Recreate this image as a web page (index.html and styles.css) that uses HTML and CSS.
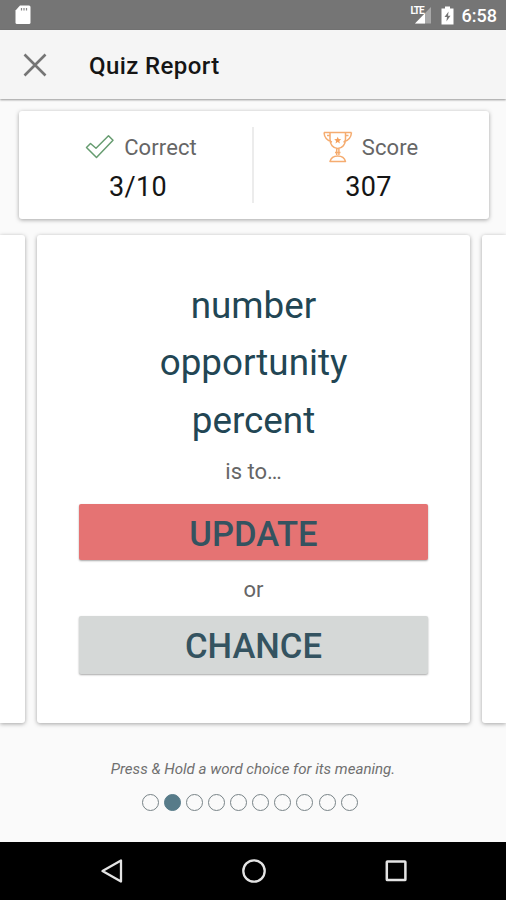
FILE: index.html
```html
<!DOCTYPE html>
<html lang="en">
<head>
<meta charset="utf-8">
<title>Quiz Report</title>
<link rel="stylesheet" href="styles.css">
</head>
<body>
<div class="screen">
  <div class="status-bar">
    <svg class="sd-icon" width="16" height="20" viewBox="0 0 16 20"><path d="M5 0.5H14Q15.500 .5 15.500 2V17.500Q15.500 19 14 19H2Q.5 19 .5 17.500V5.500Z" fill="#fff"/><path d="M6.500 3v2.500M9 3v2.500M11.500 3v2.500" stroke="#888" stroke-width="1.200"/></svg>
    <div class="status-right">
      <div class="signal"><span class="lte">LTE</span>
        <svg width="18" height="17" viewBox="0 0 18 17"><path d="M17 0V16.500H1Z" fill="#a8a8a8"/><path d="M11 6.200V16.500H1Z" fill="#fff"/></svg>
      </div>
      <svg class="battery" width="13" height="19" viewBox="0 0 13 19"><path d="M4 .5H9V2.500H12.500V18.500H.5V2.500H4Z" fill="#fff"/><path d="M7.600 5.500L3.500 11H6L5.400 15.500L9.500 9.800H7Z" fill="#757575"/></svg>
      <span class="clock">6:58</span>
    </div>
  </div>
  <header class="app-bar">
    <svg class="close" width="24" height="24" viewBox="0 0 24 24"><path d="M1.500 1.500L22.500 22.500M22.500 1.500L1.500 22.500" stroke="#757575" stroke-width="2.600"/></svg>
    <h1>Quiz Report</h1>
  </header>
  <section class="summary">
    <div class="stat">
      <div class="stat-label">
        <svg width="30" height="32" viewBox="0 0 30 32"><path d="M1.500 16.500L5.500 12.500L11 17.300L23.500 4.800L28 9.300L11.500 26.500Z" fill="none" stroke="#669c70" stroke-width="1.500" stroke-linejoin="round"/></svg>
        <span>Correct</span>
      </div>
      <div class="stat-value">3/10</div>
    </div>
    <div class="stat">
      <div class="stat-label">
        <svg width="30" height="32" viewBox="0 0 30 32"><g fill="none" stroke="#f5ac70" stroke-width="1.500" stroke-linejoin="round"><path d="M1 1.500H28.500M1 1.500Q1.500 9 9 11M28.500 1.500Q28 9 20.500 11M7 1.500V8C7 13.500 10 17.500 14.700 17.500S22.500 13.500 22.500 8V1.500M4 4.500H7M22.500 4.500H25.500M13.700 17.500V24M15.900 17.500V24M12 21.500H17.500M7 30.500C8 26.500 11 25 14.700 25S21.500 26.500 22.500 30.500Z"/></g><path d="M14.700 5.800L15.700 8.100L18.200 8.300L16.300 10L16.900 12.500L14.700 11.100L12.500 12.500L13.100 10L11.200 8.300L13.700 8.100Z" fill="#f5a05c"/></svg>
        <span>Score</span>
      </div>
      <div class="stat-value">307</div>
    </div>
  </section>
  <main class="carousel">
    <div class="card side"></div>
    <article class="card question">
      <div class="word">number</div>
      <div class="word">opportunity</div>
      <div class="word">percent</div>
      <div class="hint">is to…</div>
      <div class="choice wrong">UPDATE</div>
      <div class="or">or</div>
      <div class="choice">CHANCE</div>
    </article>
    <div class="card side"></div>
  </main>
  <p class="note">Press &amp; Hold a word choice for its meaning.</p>
  <div class="dots"><i></i><i class="active"></i><i></i><i></i><i></i><i></i><i></i><i></i><i></i><i></i></div>
  <nav class="nav-bar">
    <svg width="24" height="26" viewBox="0 0 24 26"><path d="M21 2.500V23.500L2.500 13Z" fill="none" stroke="#e4e4e4" stroke-width="2.300" stroke-linejoin="round"/></svg>
    <svg width="26" height="26" viewBox="0 0 26 26"><circle cx="13" cy="13" r="10.700" fill="none" stroke="#e4e4e4" stroke-width="2.300"/></svg>
    <svg width="24" height="26" viewBox="0 0 24 26"><rect x="2.800" y="3.500" width="18.600" height="18.600" rx=".6" fill="none" stroke="#e4e4e4" stroke-width="2.500"/></svg>
  </nav>
</div>
</body>
</html>
```
FILE: styles.css
```css
* { box-sizing: border-box; }
body { margin: 0; font-family: Roboto, "Liberation Sans", sans-serif; }
svg { display: block; flex: none; }
.screen { width: 506px; height: 900px; background: #fafafa; display: flex; flex-direction: column; overflow: hidden; }
.status-bar { height: 30px; flex: none; background: #757575; display: flex; align-items: center; justify-content: space-between; padding: 0 9px 0 15px; }
.status-right { display: flex; align-items: center; }
.signal { position: relative; width: 22px; height: 19px; margin-right: 9px; display: flex; justify-content: flex-end; align-items: flex-end; }
.signal svg { margin-bottom: 1px; }
.lte { position: absolute; left: 1px; top: 0; font-size: 10px; line-height: 10px; font-weight: 700; letter-spacing: -1px; color: #fff; }
.battery { margin-right: 8px; }
.clock { font-size: 18px; line-height: 30px; font-weight: 500; color: #fff; padding-top: 2px; }
.app-bar { height: 69px; flex: none; background: #f5f5f5; display: flex; align-items: center; padding-left: 23px; box-shadow: 0 1px 2px rgba(0,0,0,.4); }
.app-bar h1 { margin: 3px 0 0 42px; font-size: 24px; line-height: 30px; font-weight: 500; letter-spacing: .4px; color: #151515; }
.summary { height: 108px; flex: none; margin: 12px 17px 0 19px; background: #fff; border-radius: 3px; box-shadow: 0 1px 4px rgba(0,0,0,.35); display: grid; grid-template: 76px / 233px 1fr; padding: 16px 0; }
.stat { text-align: center; padding: 3px 0 0 5px; }
.stat + .stat { border-left: 2px solid #ececec; padding: 3px 6px 0 0; }
.stat-label { height: 34px; display: flex; align-items: center; justify-content: center; gap: 9px; font-size: 22px; letter-spacing: .1px; color: #666; padding-left: 4px; }
.stat:first-child .stat-label { padding-left: 6px; }
.stat-value { font-size: 27px; line-height: 38px; letter-spacing: .3px; color: #151515; margin-top: 4px; }
.carousel { height: 488px; flex: none; margin-top: 16px; display: grid; grid-template-columns: 25px 433px 24px; column-gap: 12px; }
.card { background: #fff; border-radius: 3px; box-shadow: 0 1px 4px rgba(0,0,0,.35); }
.side:first-child { border-radius: 0 3px 3px 0; }
.side:last-child { border-radius: 3px 0 0 3px; }
.question { padding: 42px 42px 0; text-align: center; }
.word { height: 57.400px; line-height: 57.400px; font-size: 36.800px; color: #224654; }
.hint, .or { font-size: 22px; color: #666; }
.hint { height: 54.800px; line-height: 45px; }
.or { height: 56px; line-height: 59px; }
.choice { height: 58px; line-height: 60px; background: #d5d8d7; color: #345360; font-size: 34.600px; font-weight: 500; border-radius: 2px; box-shadow: 0 1px 2px rgba(0,0,0,.35); }
.choice.wrong { height: 56px; background: #e57373; }
.note { margin: 34px 0 0; line-height: 24px; font-size: 15.100px; font-style: italic; color: #707070; text-align: center; }
.dots { display: flex; gap: 5.150px; margin: 13px 0 0 141.500px; }
.dots i { width: 17px; height: 17px; border: 1.500px solid #788387; border-radius: 50%; }
.dots .active { background: #577b89; border-color: #577b89; }
.nav-bar { height: 58px; flex: none; margin-top: auto; background: #000; display: flex; align-items: center; justify-content: space-between; padding: 0 98px 0 100px; }
```
